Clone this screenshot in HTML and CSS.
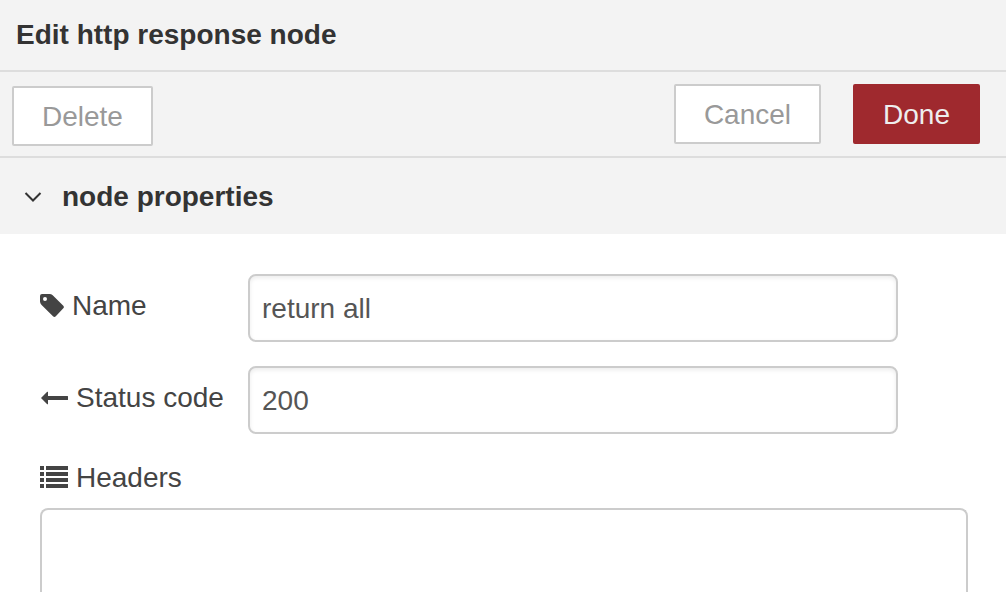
FILE: index.html
```html
<!DOCTYPE html>
<html lang="en">
<head>
<meta charset="utf-8">
<meta name="viewport" content="width=device-width, initial-scale=1">
<title>Edit http response node</title>
<link rel="stylesheet" href="styles.css">
</head>
<body>
<main class="tray">
  <header class="tray-header"><h1 class="tray-title">Edit http response node</h1></header>
  <div class="toolbar">
    <button class="button button-delete" type="button">Delete</button>
    <div class="toolbar-actions">
      <button class="button" type="button">Cancel</button>
      <button class="button button-primary" type="submit" form="node-form">Done</button>
    </div>
  </div>
  <h2 class="section-heading">
    <button class="section-toggle" type="button" aria-expanded="true" aria-controls="node-form">
      <svg class="chevron" width="18" height="12" viewBox="0 0 18 12" aria-hidden="true"><path d="M1.500 2 9 9.500 16.500 2"/></svg>
      node properties
    </button>
  </h2>
  <form class="node-form" id="node-form">
    <div class="form-row">
      <label class="form-label" for="node-name">
        <svg class="icon" width="24" height="28" viewBox="0 0 24 28" aria-hidden="true"><path fill-rule="evenodd" d="M2 2H9.500Q11.300 2 12.700 3.300L23.300 13.700Q24.500 15 23.300 16.300L15.800 24.300Q14.400 25.500 13 24.300L1.600 12.900Q0 11.300 0 9.500V4Q0 2 2 2ZM5 5A2 2 0 1 0 5 9A2 2 0 1 0 5 5Z"/></svg>
        Name
      </label>
      <input class="form-input" id="node-name" type="text" value="return all">
    </div>
    <div class="form-row">
      <label class="form-label" for="node-status">
        <svg class="icon" width="28" height="28" viewBox="0 0 28 28" aria-hidden="true"><path d="M1 14 7.200 7.800Q8 7.300 8 8.300V12H27.500Q28 12 28 12.500V15.500Q28 16 27.500 16H8V19.700Q8 20.700 7.200 20.200Z"/></svg>
        Status code
      </label>
      <input class="form-input" id="node-status" type="text" value="200">
    </div>
    <div class="headers-label" id="headers-label">
      <svg class="icon" width="28" height="28" viewBox="0 0 28 28" aria-hidden="true"><path d="M0 2H4V6H0ZM6 2H28V6H6ZM0 8H4V12H0ZM6 8H28V12H6ZM0 14H4V18H0ZM6 14H28V18H6ZM0 20H4V24H0ZM6 20H28V24H6Z"/></svg>
      Headers
    </div>
    <ol class="headers-list" aria-labelledby="headers-label"></ol>
  </form>
</main>
</body>
</html>
```
FILE: styles.css
```css
* {
  box-sizing: border-box;
}

body {
  margin: 0;
  background: #fff;
  color: #333;
  font: 28px/40px "Liberation Sans", Arial, sans-serif;
}

.tray {
  display: flex;
  flex-direction: column;
  min-height: 100vh;
}

.tray-header {
  padding: 15px 16px;
  background: #f3f3f3;
  border-bottom: 2px solid #ddd;
}

.tray-title,
.section-heading {
  margin: 0;
  font-size: 28px;
  font-weight: 700;
}

.toolbar {
  display: flex;
  align-items: flex-start;
  justify-content: space-between;
  padding: 12px 26px 10px 12px;
  background: #f3f3f3;
  border-bottom: 2px solid #ddd;
}

.toolbar-actions {
  display: flex;
  gap: 32px;
}

.button {
  height: 60px;
  padding: 2px 28px 0;
  border: 2px solid #ccc;
  border-radius: 2px;
  background: #fff;
  color: #999;
  font: inherit;
}

.button-delete {
  margin-top: 2px;
}

.button-primary {
  border-color: #9f292e;
  background: #9f292e;
  color: #eee;
}

.section-heading {
  background: #f3f3f3;
}

.section-toggle {
  display: flex;
  align-items: center;
  gap: 20px;
  width: 100%;
  padding: 19px 24px 17px;
  border: 0;
  background: none;
  color: inherit;
  font: inherit;
  line-height: 40px;
  text-align: left;
}

.chevron {
  fill: none;
  stroke: #333;
  stroke-width: 2;
}

.node-form {
  display: flex;
  flex: 1;
  flex-direction: column;
  padding: 40px 38px 0 40px;
}

.form-row {
  display: flex;
  align-items: center;
  margin-bottom: 24px;
}

.form-label,
.headers-label {
  display: flex;
  align-items: center;
  gap: 8px;
  color: #444;
}

.form-label {
  flex: none;
  width: 208px;
  padding-bottom: 4px;
}

.icon {
  flex: none;
  fill: #444;
}

.form-input {
  width: 70%;
  height: 68px;
  padding: 2px 12px 0;
  border: 2px solid #ccc;
  border-radius: 8px;
  background: #fff;
  box-shadow: inset 0 2px 4px rgba(0, 0, 0, 0.08);
  color: #555;
  font: inherit;
}

.headers-list {
  flex: 1;
  margin: 10px 0 0;
  padding: 0;
  border: 2px solid #ccc;
  border-bottom: 0;
  border-radius: 8px 8px 0 0;
  list-style: none;
}
```
